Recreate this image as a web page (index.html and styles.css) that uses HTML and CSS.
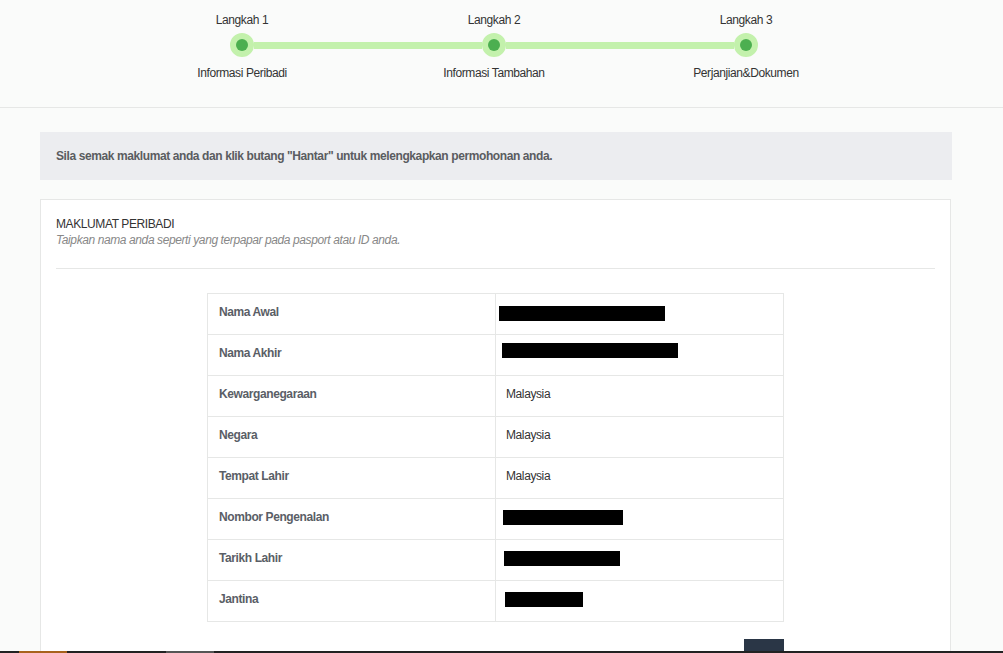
FILE: index.html
```html
<!DOCTYPE html>
<html lang="ms">

<head>
    <meta charset="UTF-8">
    <meta name="viewport" content="width=device-width, initial-scale=1.0">
    <title>Permohonan - Semakan</title>
    <link rel="stylesheet" href="styles.css">
</head>

<body>
    <div class="stepper">
        <div class="steps">
            <div class="step first">
                <div class="step-title">Langkah 1</div>
                <div class="dot-row"><span class="bar"></span><span class="dot"></span><span class="bar"></span></div>
                <div class="step-label">Informasi Peribadi</div>
            </div>
            <div class="step">
                <div class="step-title">Langkah 2</div>
                <div class="dot-row"><span class="bar"></span><span class="dot"></span><span class="bar"></span></div>
                <div class="step-label">Informasi Tambahan</div>
            </div>
            <div class="step last">
                <div class="step-title">Langkah 3</div>
                <div class="dot-row"><span class="bar"></span><span class="dot"></span><span class="bar"></span></div>
                <div class="step-label">Perjanjian&amp;Dokumen</div>
            </div>
        </div>
    </div>

    <div class="main">
        <div class="alert">Sila semak maklumat anda dan klik butang "Hantar" untuk melengkapkan permohonan anda.</div>

        <div class="card">
            <div class="card-title">MAKLUMAT PERIBADI</div>
            <div class="card-sub">Taipkan nama anda seperti yang terpapar pada pasport atau ID anda.</div>
            <hr class="divider">

            <table class="info">
                <tr>
                    <th>Nama Awal</th>
                    <td><span class="hidden-val" style="width:166px; margin-left:-7px; margin-top:3px"></span></td>
                </tr>
                <tr>
                    <th>Nama Akhir</th>
                    <td><span class="hidden-val" style="width:176px; margin-left:-4px; margin-top:-6px"></span></td>
                </tr>
                <tr>
                    <th>Kewarganegaraan</th>
                    <td>Malaysia</td>
                </tr>
                <tr>
                    <th>Negara</th>
                    <td>Malaysia</td>
                </tr>
                <tr>
                    <th>Tempat Lahir</th>
                    <td>Malaysia</td>
                </tr>
                <tr>
                    <th>Nombor Pengenalan</th>
                    <td><span class="hidden-val" style="width:120px; margin-left:-3px; margin-top:1px"></span></td>
                </tr>
                <tr>
                    <th>Tarikh Lahir</th>
                    <td><span class="hidden-val" style="width:116px; margin-left:-2px; margin-top:1px"></span></td>
                </tr>
                <tr>
                    <th>Jantina</th>
                    <td><span class="hidden-val" style="width:78px; margin-left:-1px; margin-top:1px"></span></td>
                </tr>
            </table>

            <div class="actions">
                <button class="btn-submit"></button>
            </div>
        </div>
    </div>

    <div class="taskbar">
        <span class="task orange"></span>
        <span class="task grey"></span>
    </div>
</body>

</html>
```

FILE: styles.css
```css
* {
    margin: 0;
    padding: 0;
    box-sizing: border-box;
    font-family: "Liberation Sans", Arial, sans-serif;
}

body {
    background-color: #fafbfa;
    color: #333;
    font-size: 12px;
    letter-spacing: -0.4px;
    height: 653px;
    overflow: hidden;
}

/* stepper */
.stepper {
    height: 108px;
    padding-top: 13px;
    border-bottom: 1px solid #e6e7e6;
}

.steps {
    display: flex;
    width: 756px;
    margin-left: 116px;
}

.step {
    width: 252px;
    text-align: center;
}

.step-title {
    line-height: 14px;
    margin-bottom: 6px;
    color: #333;
}

.dot-row {
    display: flex;
    align-items: center;
    height: 24px;
}

.dot-row .bar {
    flex: 1;
    height: 7px;
    background-color: #c3f1ac;
}

.step.first .bar:first-child,
.step.last .bar:last-child {
    background-color: transparent;
}

.dot-row .dot {
    width: 24px;
    height: 24px;
    border-radius: 50%;
    background-color: #c3f1ac;
    border: 6px solid #c3f1ac;
    display: block;
}

.dot-row .dot::before {
    content: '';
    display: block;
    width: 12px;
    height: 12px;
    border-radius: 50%;
    background-color: #4caf50;
}

.step-label {
    margin-top: 9px;
    line-height: 14px;
    color: #333;
}

/* main */
.main {
    padding: 24px 51px 0 40px;
}

.alert {
    background-color: #ecedf0;
    padding: 17px 16px;
    line-height: 14px;
    font-weight: bold;
    color: #5a5c60;
}

.card {
    margin: 19px 1px 0 0;
    background-color: #fff;
    border: 1px solid #e6e7e6;
    border-bottom: none;
    padding: 17px 15px 0 15px;
    height: 460px;
}

.card-title {
    line-height: 14px;
    color: #333;
}

.card-sub {
    font-style: italic;
    color: #888;
    line-height: 14px;
    margin-top: 2px;
}

.divider {
    border: none;
    border-top: 1px solid #e6e7e6;
    margin-top: 21px;
}

table.info {
    width: 577px;
    margin: 24px 0 0 151px;
    border-collapse: collapse;
    border: 1px solid #e6e7e6;
}

table.info th,
table.info td {
    height: 41px;
    border: 1px solid #e6e7e6;
    width: 50%;
    text-align: left;
    vertical-align: middle;
}

table.info th {
    padding: 0 0 4px 11px;
    font-weight: bold;
    color: #5a5e66;
}

table.info td {
    padding: 0 0 4px 10px;
    color: #333;
}

.hidden-val {
    display: block;
    height: 15px;
    background-color: #000;
}

.actions {
    width: 577px;
    margin: 17px 0 0 151px;
    display: flex;
    justify-content: flex-end;
}

.btn-submit {
    width: 40px;
    height: 34px;
    border: none;
    background-color: #2a3646;
}

/* bottom bar */
.taskbar {
    position: fixed;
    left: 0;
    bottom: 0;
    width: 100%;
    height: 2px;
    background-color: #222;
    display: flex;
}

.task {
    height: 2px;
    width: 48px;
}

.task.orange {
    margin-left: 19px;
    background-color: #a8621c;
}

.task.grey {
    margin-left: 99px;
    background-color: #555;
}
```
